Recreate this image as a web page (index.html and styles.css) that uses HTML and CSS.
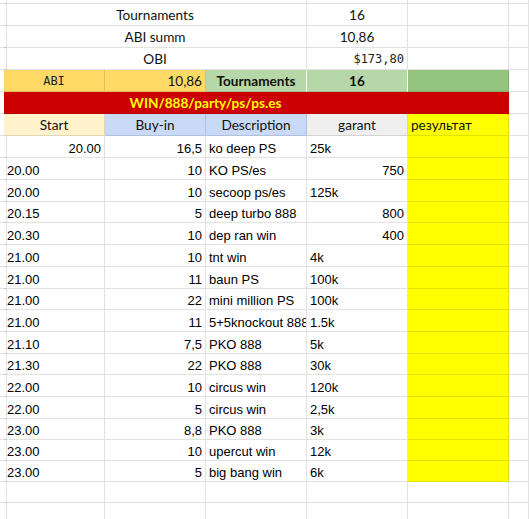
FILE: index.html
```html
<!DOCTYPE html>
<html>
<head>
<meta charset="utf-8">
<link rel="stylesheet" href="styles.css">
</head>
<body>
<div class="sheet">
  <div class="row top"><div class="c"></div><div class="c span3"></div><div class="c"></div><div class="c"></div><div class="c"></div></div>

  <div class="row"><div class="c"></div><div class="c span3 m cal">Tournaments</div><div class="c m cal">16</div><div class="c"></div><div class="c"></div></div>
  <div class="row"><div class="c"></div><div class="c span3 m cal">ABI summ</div><div class="c m cal">10,86</div><div class="c"></div><div class="c"></div></div>
  <div class="row"><div class="c"></div><div class="c span3 m cal">OBI</div><div class="c r mono">$173,80</div><div class="c"></div><div class="c"></div></div>

  <div class="row"><div class="c"></div><div class="c m mono or">ABI</div><div class="c r cal or">10,86</div><div class="c m cal b gl">Tournaments</div><div class="c m cal b gl">16</div><div class="c gd"></div><div class="c"></div></div>

  <div class="row"><div class="c"></div><div class="c span4 m cal b red">WIN/888/party/ps/ps.es</div><div class="c red"></div><div class="c"></div></div>

  <div class="row"><div class="c"></div><div class="c m cal cream">Start</div><div class="c m cal blue">Buy-in</div><div class="c m cal blue">Description</div><div class="c m cal grey">garant</div><div class="c l cal yel">результат</div><div class="c"></div></div>

  <div class="row"><div class="c"></div><div class="c r">20.00</div><div class="c r">16,5</div><div class="c">ko deep PS</div><div class="c">25k</div><div class="c yel"></div><div class="c"></div></div>
  <div class="row"><div class="c"></div><div class="c">20.00</div><div class="c r">10</div><div class="c">KO PS/es</div><div class="c r">750</div><div class="c yel"></div><div class="c"></div></div>
  <div class="row"><div class="c"></div><div class="c">20.00</div><div class="c r">10</div><div class="c">secoop ps/es</div><div class="c">125k</div><div class="c yel"></div><div class="c"></div></div>
  <div class="row s"><div class="c"></div><div class="c">20.15</div><div class="c r">5</div><div class="c">deep turbo 888</div><div class="c r">800</div><div class="c yel"></div><div class="c"></div></div>
  <div class="row"><div class="c"></div><div class="c">20.30</div><div class="c r">10</div><div class="c">dep ran win</div><div class="c r">400</div><div class="c yel"></div><div class="c"></div></div>
  <div class="row"><div class="c"></div><div class="c">21.00</div><div class="c r">10</div><div class="c">tnt win</div><div class="c">4k</div><div class="c yel"></div><div class="c"></div></div>
  <div class="row"><div class="c"></div><div class="c">21.00</div><div class="c r">11</div><div class="c">baun PS</div><div class="c">100k</div><div class="c yel"></div><div class="c"></div></div>
  <div class="row s"><div class="c"></div><div class="c">21.00</div><div class="c r">22</div><div class="c">mini million PS</div><div class="c">100k</div><div class="c yel"></div><div class="c"></div></div>
  <div class="row"><div class="c"></div><div class="c">21.00</div><div class="c r">11</div><div class="c">5+5knockout 888</div><div class="c">1.5k</div><div class="c yel"></div><div class="c"></div></div>
  <div class="row"><div class="c"></div><div class="c">21.10</div><div class="c r">7,5</div><div class="c">PKO 888</div><div class="c">5k</div><div class="c yel"></div><div class="c"></div></div>
  <div class="row s"><div class="c"></div><div class="c">21.30</div><div class="c r">22</div><div class="c">PKO 888</div><div class="c">30k</div><div class="c yel"></div><div class="c"></div></div>
  <div class="row"><div class="c"></div><div class="c">22.00</div><div class="c r">10</div><div class="c">circus win</div><div class="c">120k</div><div class="c yel"></div><div class="c"></div></div>
  <div class="row"><div class="c"></div><div class="c">22.00</div><div class="c r">5</div><div class="c">circus win</div><div class="c">2,5k</div><div class="c yel"></div><div class="c"></div></div>
  <div class="row s"><div class="c"></div><div class="c">23.00</div><div class="c r">8,8</div><div class="c">PKO 888</div><div class="c">3k</div><div class="c yel"></div><div class="c"></div></div>
  <div class="row s"><div class="c"></div><div class="c">23.00</div><div class="c r">10</div><div class="c">upercut win</div><div class="c">12k</div><div class="c yel"></div><div class="c"></div></div>
  <div class="row s"><div class="c"></div><div class="c">23.00</div><div class="c r">5</div><div class="c">big bang win</div><div class="c">6k</div><div class="c yel"></div><div class="c"></div></div>
  <div class="row s"><div class="c"></div><div class="c"></div><div class="c"></div><div class="c"></div><div class="c"></div><div class="c"></div><div class="c"></div></div>
  <div class="row"><div class="c"></div><div class="c"></div><div class="c"></div><div class="c"></div><div class="c"></div><div class="c"></div><div class="c"></div></div>
</div>
</body>
</html>
```

FILE: styles.css
```css
html, body {
  margin: 0;
  padding: 0;
  background: #fff;
  overflow: hidden;
}

.sheet {
  width: 529px;
  font-family: "Liberation Sans", Arial, sans-serif;
  font-size: 13px;
  color: #000;
}

.row {
  display: grid;
  grid-template-columns: 4px repeat(5, 101px) 1fr;
  height: 22px;
}

.row.s {
  height: 21px;
}

.row.top {
  height: 4px;
}

.c {
  box-sizing: border-box;
  border-right: 1px solid rgba(0, 0, 0, 0.115);
  border-bottom: 1px solid rgba(0, 0, 0, 0.115);
  overflow: hidden;
  white-space: nowrap;
  display: flex;
  align-items: flex-end;
  justify-content: flex-start;
  padding: 0 3px 1px 3px;
  line-height: 15px;
  min-width: 0;
}

.span3 { grid-column: span 3; }
.span4 { grid-column: span 4; }

.l { justify-content: flex-start; }
.r { justify-content: flex-end; }
.m { justify-content: center; }

.cal {
  font-family: Lato, "Open Sans", sans-serif;
  font-size: 13.6px;
  padding-bottom: 2px;
  color: #111;
}

.mono {
  font-family: "DejaVu Sans Mono", "Liberation Mono", monospace;
  font-size: 12px;
  padding-bottom: 2px;
  color: #222;
}

.b { font-weight: bold; }

.or { background: #ffd966; }
.gl { background: #b6d7a8; border-right-color: #fff; }
.gd { background: #93c47d; }
.red { background: #cc0000; color: #ffff00; border-right-color: transparent; }
.cream { background: #fff2cc; }
.blue { background: #c9daf8; }
.grey { background: #efefef; }
.yel { background: #ffff00; }
```
